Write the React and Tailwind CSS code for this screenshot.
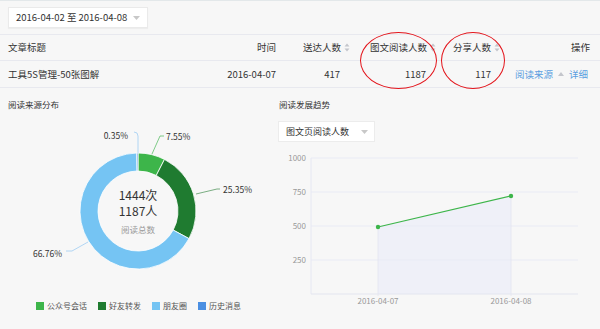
import React from 'react';

const font = { fontFamily: '"Noto Sans CJK SC", "Noto Sans", sans-serif' };

const segments = [
  { name: '公众号会话', value: 7.55, color: '#3db54a' },
  { name: '好友转发', value: 25.35, color: '#1f7b30' },
  { name: '朋友圈', value: 66.76, color: '#75c4f3' },
  { name: '历史消息', value: 0.35, color: '#4a8fe2' },
];

function arc(cx, cy, r0, r1, a0, a1) {
  const p = (r, a) => [cx + r * Math.sin(a), cy - r * Math.cos(a)];
  const large = a1 - a0 > Math.PI ? 1 : 0;
  const [x0, y0] = p(r1, a0);
  const [x1, y1] = p(r1, a1);
  const [x2, y2] = p(r0, a1);
  const [x3, y3] = p(r0, a0);
  return `M${x0} ${y0}A${r1} ${r1} 0 ${large} 1 ${x1} ${y1}L${x2} ${y2}A${r0} ${r0} 0 ${large} 0 ${x3} ${y3}Z`;
}

function SortIcon() {
  return (
    <svg width="6" height="9" viewBox="0 0 6 9" className="ml-[3px] shrink-0">
      <path d="M3 0.5L5.5 3.5H0.5Z" fill="#c4c6cc" />
      <path d="M3 8.5L5.5 5.5H0.5Z" fill="#c4c6cc" />
    </svg>
  );
}

function Caret() {
  return (
    <svg width="7" height="4" viewBox="0 0 7 4">
      <path d="M0 0H7L3.5 4Z" fill="#c8c8c8" />
    </svg>
  );
}

function Donut() {
  const cx = 138;
  const cy = 92;
  let start = 0;
  const total = segments.reduce((s, x) => s + x.value, 0);
  const paths = segments.map((s) => {
    const a0 = start;
    const a1 = start + (s.value / total) * Math.PI * 2;
    start = a1;
    return <path key={s.name} d={arc(cx, cy, 40, 58, a0, a1)} fill={s.color} stroke="#fff" strokeWidth="0.8" />;
  });
  return (
    <svg width="270" height="180" className="block">
      {paths}
      <path d="M138 34 L138 17 Q138 13 134 13" fill="none" stroke="#9fcdf2" strokeWidth="0.8" />
      <path d="M152 35 L160 17 L164 17" fill="none" stroke="#5fbf6b" strokeWidth="0.8" />
      <path d="M196 75 L217 70 L220 70" fill="none" stroke="#5a9a64" strokeWidth="0.8" />
      <path d="M88 123 L72 132 L66 132" fill="none" stroke="#9fcdf2" strokeWidth="0.8" />
      <g fill="#333" fontSize="8.5" style={font}>
        <text x="128" y="19.5" textAnchor="end">0.35%</text>
        <text x="166" y="21">7.55%</text>
        <text x="223" y="74">25.35%</text>
        <text x="62" y="138" textAnchor="end">66.76%</text>
      </g>
      <g style={font} textAnchor="middle">
        <text x="138" y="80.5" fontSize="12" fill="#333">1444次</text>
        <text x="138" y="96.5" fontSize="12" fill="#333">1187人</text>
        <text x="138" y="114" fontSize="8.5" fill="#999">阅读总数</text>
      </g>
    </svg>
  );
}

function TrendChart() {
  const ys = [
    { v: '1000', y: 10 },
    { v: '750', y: 44 },
    { v: '500', y: 78 },
    { v: '250', y: 112 },
  ];
  return (
    <svg width="330" height="165" className="block">
      <polygon points="108,79 241,48 241,146 108,146" fill="#eff0f8" />
      {ys.map((t) => (
        <g key={t.v}>
          <line x1="41" x2="308" y1={t.y} y2={t.y} stroke="#e9ebf5" strokeWidth="1" />
          <text x="36" y={t.y + 3} textAnchor="end" fontSize="8" fill="#999" style={font}>{t.v}</text>
        </g>
      ))}
      <line x1="41" x2="41" y1="10" y2="146" stroke="#e6e8f3" strokeWidth="1" />
      <line x1="41" x2="308" y1="146" y2="146" stroke="#e3e5f0" strokeWidth="1.2" />
      <line x1="108" x2="108" y1="79" y2="148" stroke="#e3e5f0" strokeWidth="0.8" />
      <line x1="241" x2="241" y1="48" y2="148" stroke="#e3e5f0" strokeWidth="0.8" />
      <polyline points="108,79 241,48" fill="none" stroke="#3db54a" strokeWidth="1.2" />
      <circle cx="108" cy="79" r="2.2" fill="#3db54a" />
      <circle cx="241" cy="48" r="2.2" fill="#3db54a" />
      <g fontSize="8" fill="#999" textAnchor="middle" style={font}>
        <text x="108" y="156">2016-04-07</text>
        <text x="241" y="156">2016-04-08</text>
      </g>
    </svg>
  );
}

export default function App() {
  return (
    <div className="relative w-[600px] h-[329px] overflow-hidden bg-[#f7f7f7] text-[#333] border-t border-[#e3e8ea]" style={font}>
      {/* date range */}
      <div className="h-[33px] px-2 pt-[6px]">
        <div className="flex items-center justify-between w-[140px] h-[21px] bg-white border border-[#eaeaea] shadow-[0_1px_1px_rgba(0,0,0,0.04)] pl-[7px] pr-[7px] text-[9.5px]">
          <span>2016-04-02 至 2016-04-08</span>
          <Caret />
        </div>
      </div>

      {/* table */}
      <div className="flex items-center h-[27px] border-y border-[#e8e9ef] text-[9.5px]">
        <div className="w-[200px] pl-2">文章标题</div>
        <div className="w-[76px] text-right">时间</div>
        <div className="w-[74px] flex items-center justify-end">送达人数<SortIcon /></div>
        <div className="w-[86px] flex items-center justify-end">图文阅读人数<SortIcon /></div>
        <div className="w-[64px] flex items-center justify-end">分享人数<SortIcon /></div>
        <div className="w-[90px] text-right">操作</div>
      </div>
      <div className="flex items-center h-[27px] border-b border-[#e8e9ef] text-[9.5px]">
        <div className="w-[200px] pl-2">工具5S管理-50张图解</div>
        <div className="w-[76px] text-right">2016-04-07</div>
        <div className="w-[74px] text-right pr-[10px]">417</div>
        <div className="w-[86px] text-right pr-[10px]">1187</div>
        <div className="w-[64px] text-right pr-[9px]">117</div>
        <div className="w-[90px] flex items-center justify-end gap-[5px] pr-[2px] text-[#5a9ee0]">
          <span>阅读来源</span>
          <svg width="6" height="4" viewBox="0 0 6 4"><path d="M3 0L6 4H0Z" fill="#c4c6cc" /></svg>
          <span>详细</span>
        </div>
      </div>

      {/* bottom panels */}
      <div className="flex">
        <div className="w-[270px]">
          <div className="pl-2 pt-[10px] h-[31px] text-[8.5px]">阅读来源分布</div>
          <Donut />
          <div className="flex items-center pl-[36px] mt-[1px] text-[8px] text-[#555]">
            {segments.map((s) => (
              <div key={s.name} className="flex items-center mr-[11px]">
                <span className="w-[8px] h-[8px] mr-[3px]" style={{ backgroundColor: s.color }} />
                <span>{s.name}</span>
              </div>
            ))}
          </div>
        </div>
        <div className="flex-1">
          <div className="pl-[9px] pt-[10px] h-[33px] text-[8.5px]">阅读发展趋势</div>
          <div className="ml-[8px] flex items-center justify-between w-[97px] h-[21px] bg-white border border-[#ececec] pl-[7px] pr-[6px] text-[9px]">
            <span>图文页阅读人数</span>
            <Caret />
          </div>
          <div className="mt-[6px]">
            <TrendChart />
          </div>
        </div>
      </div>

      {/* red annotation ellipses */}
      <div className="absolute left-[360px] top-[31px] w-[77px] h-[57px] rounded-[50%] border-[1.5px] border-[#e3141b]" />
      <div className="absolute left-[441px] top-[31px] w-[64px] h-[57px] rounded-[50%] border-[1.5px] border-[#e3141b]" />
    </div>
  );
}
